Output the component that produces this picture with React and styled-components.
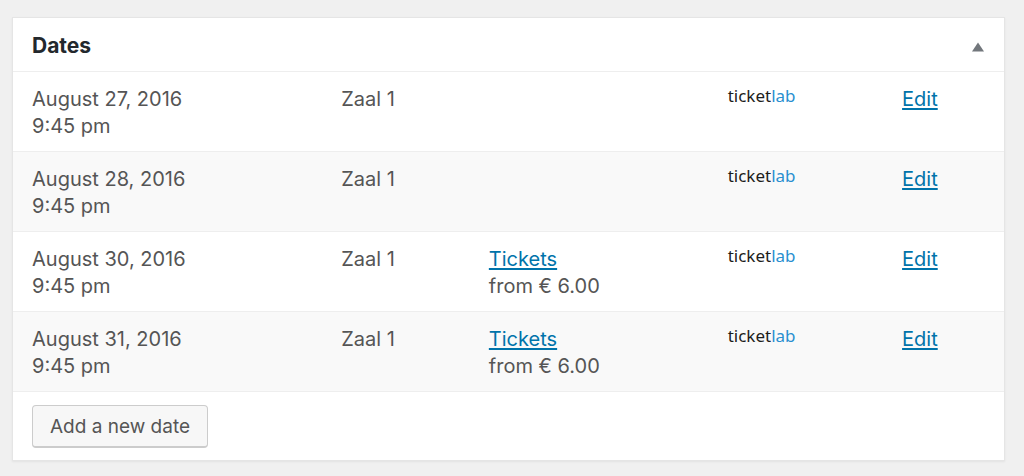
import React from 'react';
import styled, { createGlobalStyle } from 'styled-components';

const colors = {
  page: '#f0f0f0',
  border: '#e5e5e5',
  line: '#eeeeee',
  stripe: '#f9f9f9',
  text: '#555555',
  heading: '#23282d',
  link: '#0073aa',
  toggle: '#72777c',
  brandDark: '#1d1d1b',
  brandBlue: '#2a8fd0',
};

const events = [
  { id: 1, date: 'August 27, 2016', time: '9:45 pm', venue: 'Zaal 1' },
  { id: 2, date: 'August 28, 2016', time: '9:45 pm', venue: 'Zaal 1' },
  { id: 3, date: 'August 30, 2016', time: '9:45 pm', venue: 'Zaal 1', price: '€ 6.00' },
  { id: 4, date: 'August 31, 2016', time: '9:45 pm', venue: 'Zaal 1', price: '€ 6.00' },
];

const GlobalStyle = createGlobalStyle`
  *, *::before, *::after {
    box-sizing: border-box;
  }

  body {
    margin: 0;
    background: ${colors.page};
    color: ${colors.text};
    font-family: Inter, 'Liberation Sans', sans-serif;
    font-size: 20px;
    line-height: 27px;
  }
`;

const Page = styled.main`
  padding: 17px 19px 15px 12px;
`;

const MetaBox = styled.section`
  background: #ffffff;
  border: 1px solid ${colors.border};
  box-shadow: 0 1px 2px rgba(0, 0, 0, 0.06);
`;

const BoxHeader = styled.header`
  display: flex;
  justify-content: space-between;
  align-items: center;
  height: 54px;
  padding: 2px 19px 0;
  border-bottom: 1px solid ${colors.line};
`;

const BoxTitle = styled.h2`
  margin: 0;
  color: ${colors.heading};
  font-size: 21px;
  font-weight: 700;
`;

const Toggle = styled.button`
  display: flex;
  padding: 2px 0 0;
  border: 0;
  background: none;
  color: ${colors.toggle};
  cursor: pointer;
`;

const DatesTable = styled.table`
  width: 100%;
  table-layout: fixed;
  border-collapse: separate;
  border-spacing: 0;
`;

const Column = styled.col`
  width: ${(props) => props.$width};
`;

const Row = styled.tr`
  height: 80px;

  &:nth-child(even) {
    background: ${colors.stripe};
  }
`;

const Cell = styled.td`
  padding: 14px 0 11px 19px;
  border-bottom: 1px solid ${colors.line};
  vertical-align: top;
`;

const Line = styled.div`
  white-space: nowrap;
`;

const Link = styled.a`
  color: ${colors.link};
  text-decoration: underline;
  text-decoration-thickness: 2px;
  text-underline-offset: 2px;
`;

const Brand = styled.div`
  color: ${colors.brandDark};
  font-family: 'Noto Sans', 'Open Sans', sans-serif;
  font-size: 17px;
  line-height: 19px;
`;

const BrandAccent = styled.span`
  color: ${colors.brandBlue};
`;

const BoxFooter = styled.footer`
  padding: 13px 19px 12px;
`;

const AddButton = styled.button`
  display: block;
  height: 43px;
  padding: 1px 17px 0;
  border: 1px solid #cccccc;
  border-bottom-width: 2px;
  border-radius: 4px;
  background: #f7f7f7;
  color: ${colors.text};
  font: inherit;
  font-size: 19px;
  cursor: pointer;
`;

function EventRow({ date, time, venue, price }) {
  return (
    <Row>
      <Cell>
        <Line>{date}</Line>
        <Line>{time}</Line>
      </Cell>
      <Cell>{venue}</Cell>
      <Cell>
        {price && (
          <>
            <Line>
              <Link href="#tickets">Tickets</Link>
            </Line>
            <Line>from {price}</Line>
          </>
        )}
      </Cell>
      <Cell>
        <Brand>
          ticket<BrandAccent>lab</BrandAccent>
        </Brand>
      </Cell>
      <Cell>
        <Link href="#edit">Edit</Link>
      </Cell>
    </Row>
  );
}

function App() {
  return (
    <Page>
      <GlobalStyle />
      <MetaBox>
        <BoxHeader>
          <BoxTitle>Dates</BoxTitle>
          <Toggle type="button" aria-label="Toggle panel: Dates">
            <svg width="14" height="10" viewBox="0 0 14 10" aria-hidden="true">
              <path d="M7 0.5L13 9.5H1Z" fill="currentColor" />
            </svg>
          </Toggle>
        </BoxHeader>
        <DatesTable>
          <colgroup>
            <Column $width="31.2%" />
            <Column $width="14.9%" />
            <Column $width="24.1%" />
            <Column $width="17.6%" />
            <Column $width="12.2%" />
          </colgroup>
          <tbody>
            {events.map((event) => (
              <EventRow key={event.id} {...event} />
            ))}
          </tbody>
        </DatesTable>
        <BoxFooter>
          <AddButton type="button">Add a new date</AddButton>
        </BoxFooter>
      </MetaBox>
    </Page>
  );
}

export default App;
